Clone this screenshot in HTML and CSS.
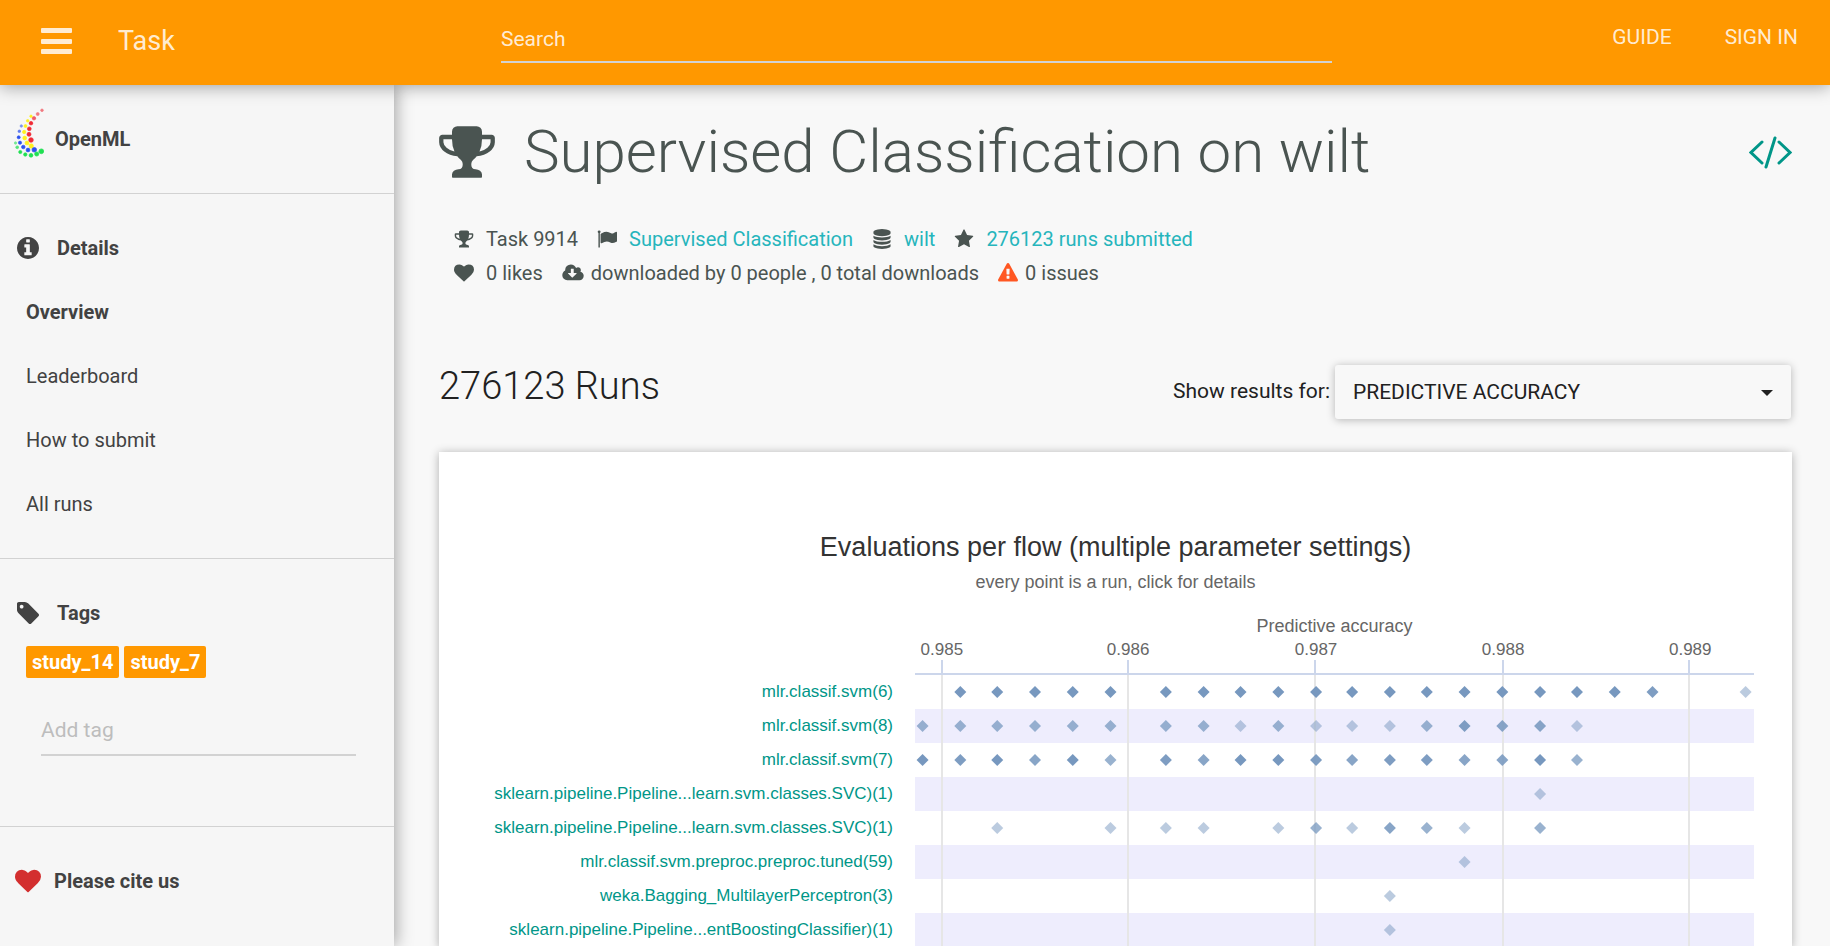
FILE: index.html
```html
<!DOCTYPE html>
<html lang="en">
<head>
<meta charset="utf-8">
<title>OpenML Task 9914</title>
<meta name="viewport" content="width=device-width, initial-scale=1">
<link rel="stylesheet" href="styles.css">
</head>
<body>
<svg class="sprite" aria-hidden="true">
  <symbol id="i-trophy" viewBox="0 0 1792 1792"><path d="M522 883q-74-162-74-371h-256v96q0 78 94.5 162t235.5 113zm1078-275v-96h-256q0 209-74 371 141-29 235.5-113t94.5-162zm128-128v128q0 71-41.5 143t-112 130-173 97.5-215.5 44.5q-42 54-95 95-38 34-52.5 72.5t-14.5 89.5q0 54 30.5 91t97.5 37q75 0 133.5 45.5t58.5 114.5v64q0 14-9 23t-23 9h-832q-14 0-23-9t-9-23v-64q0-69 58.5-114.5t133.5-45.5q67 0 97.5-37t30.5-91q0-51-14.5-89.5t-52.5-72.5q-53-41-95-95-113-5-215.5-44.5t-173-97.5-112-130-41.5-143v-128q0-40 28-68t68-28h288v-96q0-66 47-113t113-47h576q66 0 113 47t47 113v96h288q40 0 68 28t28 68z"/></symbol>
  <symbol id="i-info" viewBox="128 128 1536 1536"><path d="M1152 1376v-160q0-14-9-23t-23-9h-96v-512q0-14-9-23t-23-9h-320q-14 0-23 9t-9 23v160q0 14 9 23t23 9h96v320h-96q-14 0-23 9t-9 23v160q0 14 9 23t23 9h448q14 0 23-9t9-23zm-128-896v-160q0-14-9-23t-23-9h-192q-14 0-23 9t-9 23v160q0 14 9 23t23 9h192q14 0 23-9t9-23zm640 416q0 209-103 385.5t-279.5 279.5-385.5 103-385.5-103-279.5-279.5-103-385.5 103-385.5 279.5-279.5 385.5-103 385.5 103 279.5 279.5 103 385.5z"/></symbol>
  <symbol id="i-tag" viewBox="128 128 1515 1515"><path d="M576 448q0-53-37.5-90.5t-90.5-37.5-90.5 37.5-37.5 90.5 37.5 90.5 90.5 37.5 90.5-37.5 37.5-90.5zm1067 576q0 53-37 90l-491 492q-39 37-91 37-53 0-90-37l-715-716q-38-37-64.5-101t-26.5-117v-416q0-52 38-90t90-38h416q53 0 117 26.5t102 64.5l715 714q37 39 37 91z"/></symbol>
  <symbol id="i-heart" viewBox="0 0 1792 1792"><path d="M896 1664q-26 0-44-18l-624-602q-10-8-27.5-26t-55.5-65.5-68-97.5-53.5-121-23.5-138q0-220 127-344t351-124q62 0 126.5 21.5t120 58 95.5 68.5 76 68q36-36 76-68t95.5-68.5 120-58 126.5-21.5q224 0 351 124t127 344q0 221-229 450l-623 600q-18 18-44 18z"/></symbol>
  <symbol id="i-flag" viewBox="0 0 1792 1792"><path d="M320 256q0 72-64 110v1266q0 13-9.5 22.5t-22.5 9.5h-64q-13 0-22.5-9.5t-9.5-22.5v-1266q-64-38-64-110 0-53 37.5-90.5t90.5-37.5 90.5 37.5 37.5 90.5zm1472 64v763q0 25-12.5 38.5t-39.5 27.5q-215 116-369 116-61 0-123.5-22t-108.5-48-115.5-48-142.5-22q-192 0-464 146-17 9-33 9-26 0-45-19t-19-45v-742q0-32 31-55 21-14 79-43 236-120 421-120 107 0 200 29t219 88q38 19 88 19 54 0 117.5-21t110-47 88-47 54.5-21q26 0 45 19t19 45z"/></symbol>
  <symbol id="i-database" viewBox="0 0 1792 1792"><path d="M896 768q237 0 443-43t325-127v170q0 69-103 128t-280 93.5-385 34.5-385-34.5-280-93.5-103-128v-170q119 84 325 127t443 43zm0 768q237 0 443-43t325-127v170q0 69-103 128t-280 93.5-385 34.5-385-34.5-280-93.5-103-128v-170q119 84 325 127t443 43zm0-384q237 0 443-43t325-127v170q0 69-103 128t-280 93.5-385 34.5-385-34.5-280-93.5-103-128v-170q119 84 325 127t443 43zm0-1152q208 0 385 34.5t280 93.5 103 128v128q0 69-103 128t-280 93.5-385 34.5-385-34.5-280-93.5-103-128v-128q0-69 103-128t280-93.5 385-34.5z"/></symbol>
  <symbol id="i-star" viewBox="0 0 1792 1792"><path d="M1728 647q0 22-26 48l-363 354 86 500q1 7 1 20 0 21-10.5 35.5t-30.5 14.5q-19 0-40-12l-449-236-449 236q-22 12-40 12-21 0-31.5-14.5t-10.5-35.5q0-6 2-20l86-500-364-354q-25-27-25-48 0-37 56-46l502-73 225-455q19-41 49-41t49 41l225 455 502 73q56 9 56 46z"/></symbol>
  <symbol id="i-cloud" viewBox="-64 0 1920 1792"><path d="M1216 928q0-14-9-23t-23-9h-224v-352q0-13-9.5-22.5t-22.5-9.5h-192q-13 0-22.5 9.5t-9.5 22.5v352h-224q-13 0-22.5 9.5t-9.5 22.5q0 14 9 23l352 352q9 9 23 9t23-9l351-351q10-12 10-24zm640 224q0 159-112.5 271.5t-271.5 112.5h-1088q-185 0-316.5-131.5t-131.5-316.5q0-130 70-240t188-165q-2-30-2-43 0-212 150-362t362-150q156 0 285.5 87t188.5 231q71-62 166-62 106 0 181 75t75 181q0 76-41 138 130 31 213.5 135.5t83.5 238.5z"/></symbol>
  <symbol id="i-warning" viewBox="0 0 1792 1792"><path d="M1024 1375v-190q0-14-9.5-23.5t-22.5-9.5h-192q-13 0-22.5 9.5t-9.5 23.5v190q0 14 9.5 23.5t22.5 9.5h192q13 0 22.5-9.5t9.5-23.5zm-2-374l18-459q0-12-10-19-13-11-24-11h-220q-11 0-24 11-10 7-10 21l17 457q0 10 10 16.5t24 6.5h185q14 0 23.5-6.5t10.5-16.5zm-14-934l768 1408q35 63-2 126-17 29-46.5 46t-63.5 17h-1536q-34 0-63.5-17t-46.5-46q-37-63-2-126l768-1408q17-31 47-49t65-18 65 18 47 49z"/></symbol>
  <defs><path id="pt" d="M0-6L6 0L0 6L-6 0Z"/></defs>
</svg>

<header class="topbar">
  <div class="topbar-brand">
    <button class="menu-button" type="button" aria-label="Menu">
      <svg width="31" height="26" viewBox="0 0 31 26"><rect width="31" height="5" rx="1"/><rect y="11" width="31" height="5" rx="1"/><rect y="21" width="31" height="5" rx="1"/></svg>
    </button>
    <span class="topbar-title">Task</span>
  </div>
  <div class="topbar-main">
    <input class="search" type="text" placeholder="Search" aria-label="Search">
    <nav class="topbar-nav"><a href="#guide">GUIDE</a><a href="#signin">SIGN IN</a></nav>
  </div>
</header>

<div class="layout">
  <aside class="sidebar">
    <section class="side-section">
      <a class="side-item side-brand" href="#home">
        <svg width="30" height="50" viewBox="14 108 30 50" stroke-width="0.7" aria-hidden="true">
          <g fill="#f02a35" stroke="#f02a35"><circle cx="42" cy="110.3" r="1.3" opacity=".6"/><circle cx="37.7" cy="114" r="1.5" opacity=".6"/><circle cx="34" cy="118.3" r="1.7" opacity=".75"/><circle cx="31" cy="123.2" r="1.8"/><circle cx="29.3" cy="128.8" r="1.9"/><circle cx="29" cy="134.3" r="2"/><circle cx="31" cy="140" r="2.3"/></g>
          <g fill="#fff01e" stroke="#fff01e"><circle cx="31" cy="116.2" r="1.2"/><circle cx="27.7" cy="120.8" r="1.3"/><circle cx="25.5" cy="126" r="1.5"/><circle cx="24.2" cy="132" r="1.7"/><circle cx="24.7" cy="138" r="1.9"/><circle cx="27" cy="143" r="2"/><circle cx="31.2" cy="146" r="2.2"/></g>
          <g fill="#2b50ee" stroke="#2b50ee"><circle cx="21.3" cy="126" r="1.2" opacity=".6"/><circle cx="19.3" cy="131.3" r="1.3" opacity=".75"/><circle cx="18.7" cy="137.3" r="1.5"/><circle cx="20" cy="142.7" r="1.6"/><circle cx="23.3" cy="147" r="1.8"/><circle cx="28" cy="150" r="1.9"/><circle cx="34.3" cy="149.8" r="2.3"/></g>
          <g fill="#1fe052" stroke="#1fe052"><circle cx="15.5" cy="143" r="1.2" opacity=".6"/><circle cx="17.2" cy="147.3" r="1.4" opacity=".75"/><circle cx="20.3" cy="152" r="1.6"/><circle cx="25.3" cy="154.5" r="1.7"/><circle cx="31" cy="155.3" r="1.9"/><circle cx="36.7" cy="154" r="2.1"/><circle cx="41.3" cy="151.3" r="2.4"/></g>
        </svg>
        OpenML</a>
    </section>
    <section class="side-section">
      <h2 class="side-item side-heading"><svg class="icon-side"><use href="#i-info"/></svg>Details</h2>
      <nav>
        <a class="side-item side-link active" href="#overview">Overview</a>
        <a class="side-item side-link" href="#leaderboard">Leaderboard</a>
        <a class="side-item side-link" href="#submit">How to submit</a>
        <a class="side-item side-link" href="#runs">All runs</a>
      </nav>
    </section>
    <section class="side-section">
      <h2 class="side-item side-heading"><svg class="icon-side"><use href="#i-tag"/></svg>Tags</h2>
      <div class="tags"><a class="tag" href="#study_14">study_14</a><a class="tag" href="#study_7">study_7</a></div>
      <input class="add-tag" type="text" placeholder="Add tag" aria-label="Add tag">
    </section>
    <section class="side-section">
      <a class="side-item side-cite" href="#cite"><svg class="icon-heart"><use href="#i-heart"/></svg>Please cite us</a>
    </section>
  </aside>

  <main class="content">
    <div class="title-row">
      <svg class="icon-title"><use href="#i-trophy"/></svg>
      <h1>Supervised Classification on wilt</h1>
      <a class="code-link" href="#api" aria-label="API">
        <svg width="43" height="33" viewBox="0 0 43 33" fill="none" stroke="currentColor" stroke-width="3" stroke-linecap="round"><path d="M13 6L2 16.500L13 27M30 6L41 16.500L30 27M26 2L17 31"/></svg>
      </a>
    </div>
    <div class="meta">
      <div class="meta-row">
        <span class="meta-item"><svg class="icon"><use href="#i-trophy"/></svg>Task 9914</span>
        <span class="meta-item"><svg class="icon"><use href="#i-flag"/></svg><a href="#type">Supervised Classification</a></span>
        <span class="meta-item"><svg class="icon"><use href="#i-database"/></svg><a href="#wilt">wilt</a></span>
        <span class="meta-item"><svg class="icon"><use href="#i-star"/></svg><a href="#runs">276123 runs submitted</a></span>
      </div>
      <div class="meta-row">
        <span class="meta-item"><svg class="icon"><use href="#i-heart"/></svg>0 likes</span>
        <span class="meta-item tight"><svg class="icon wide"><use href="#i-cloud"/></svg>downloaded by 0 people , 0 total downloads</span>
        <span class="meta-item tight"><svg class="icon warning"><use href="#i-warning"/></svg>0 issues</span>
      </div>
    </div>

    <div class="runs-row">
      <h2>276123 Runs</h2>
      <label for="measure">Show results for:</label>
      <div class="select-wrap">
        <select id="measure"><option>PREDICTIVE ACCURACY</option></select>
      </div>
    </div>

    <section class="card">
      <h3 class="chart-title">Evaluations per flow (multiple parameter settings)</h3>
      <p class="chart-subtitle">every point is a run, click for details</p>
      <div class="chart">
        <div class="flows">
          <a href="#f1">mlr.classif.svm(6)</a>
          <a href="#f2">mlr.classif.svm(8)</a>
          <a href="#f3">mlr.classif.svm(7)</a>
          <a href="#f4">sklearn.pipeline.Pipeline...learn.svm.classes.SVC)(1)</a>
          <a href="#f5">sklearn.pipeline.Pipeline...learn.svm.classes.SVC)(1)</a>
          <a href="#f6">mlr.classif.svm.preproc.preproc.tuned(59)</a>
          <a href="#f7">weka.Bagging_MultilayerPerceptron(3)</a>
          <a href="#f8">sklearn.pipeline.Pipeline...entBoostingClassifier)(1)</a>
        </div>
        <div class="plot">
          <p class="axis-title">Predictive accuracy</p>
          <svg class="plot-area" width="100%" height="309">
            <g class="axis-label">
              <text x="3.2%" y="17">0.985</text><text x="25.4%" y="17">0.986</text><text x="47.8%" y="17">0.987</text><text x="70.1%" y="17">0.988</text><text x="92.4%" y="17">0.989</text>
            </g>
            <g class="band">
              <rect y="71" width="100%" height="34"/><rect y="139" width="100%" height="34"/><rect y="207" width="100%" height="34"/><rect y="275" width="100%" height="34"/>
            </g>
            <g class="grid">
              <line x1="3.2%" x2="3.2%" y1="37" y2="309"/><line x1="25.4%" x2="25.4%" y1="37" y2="309"/><line x1="47.7%" x2="47.7%" y1="37" y2="309"/><line x1="70.1%" x2="70.1%" y1="37" y2="309"/><line x1="92.3%" x2="92.3%" y1="37" y2="309"/>
            </g>
            <g class="axis">
              <line x1="0" x2="100%" y1="36" y2="36"/>
              <line x1="3.2%" x2="3.2%" y1="22" y2="36"/><line x1="25.4%" x2="25.4%" y1="22" y2="36"/><line x1="47.7%" x2="47.7%" y1="22" y2="36"/><line x1="70.1%" x2="70.1%" y1="22" y2="36"/><line x1="92.3%" x2="92.3%" y1="22" y2="36"/>
            </g>
            <svg class="points" y="54" overflow="visible">
              <use class="n5" href="#pt" x="5.4%"/><use class="n5" href="#pt" x="9.8%"/><use class="n5" href="#pt" x="14.3%"/><use class="n5" href="#pt" x="18.8%"/><use class="n5" href="#pt" x="23.3%"/><use class="n5" href="#pt" x="29.9%"/><use class="n5" href="#pt" x="34.4%"/><use class="n5" href="#pt" x="38.8%"/><use class="n5" href="#pt" x="43.3%"/><use class="n5" href="#pt" x="47.8%"/><use class="n5" href="#pt" x="52.1%"/><use class="n5" href="#pt" x="56.6%"/><use class="n5" href="#pt" x="61%"/><use class="n5" href="#pt" x="65.5%"/><use class="n5" href="#pt" x="70%"/><use class="n5" href="#pt" x="74.5%"/><use class="n5" href="#pt" x="78.9%"/><use class="n5" href="#pt" x="83.4%"/><use class="n4" href="#pt" x="87.9%"/><use class="n1" href="#pt" x="99%"/>
            </svg>
            <svg class="points" y="88" overflow="visible">
              <use class="n2" href="#pt" x="0.9%"/><use class="n2" href="#pt" x="5.4%"/><use class="n2" href="#pt" x="9.8%"/><use class="n2" href="#pt" x="14.3%"/><use class="n2" href="#pt" x="18.8%"/><use class="n2" href="#pt" x="23.3%"/><use class="n2" href="#pt" x="29.9%"/><use class="n2" href="#pt" x="34.4%"/><use class="n1" href="#pt" x="38.8%"/><use class="n2" href="#pt" x="43.3%"/><use class="n1" href="#pt" x="47.8%"/><use class="n1" href="#pt" x="52.1%"/><use class="n1" href="#pt" x="56.6%"/><use class="n2" href="#pt" x="61%"/><use class="n4" href="#pt" x="65.5%"/><use class="n3" href="#pt" x="70%"/><use class="n3" href="#pt" x="74.5%"/><use class="n1" href="#pt" x="78.9%"/>
            </svg>
            <svg class="points" y="122" overflow="visible">
              <use class="n5" href="#pt" x="0.9%"/><use class="n4" href="#pt" x="5.4%"/><use class="n5" href="#pt" x="9.8%"/><use class="n3" href="#pt" x="14.3%"/><use class="n5" href="#pt" x="18.8%"/><use class="n2" href="#pt" x="23.3%"/><use class="n4" href="#pt" x="29.9%"/><use class="n3" href="#pt" x="34.4%"/><use class="n5" href="#pt" x="38.8%"/><use class="n5" href="#pt" x="43.3%"/><use class="n4" href="#pt" x="47.8%"/><use class="n3" href="#pt" x="52.1%"/><use class="n4" href="#pt" x="56.6%"/><use class="n4" href="#pt" x="61%"/><use class="n3" href="#pt" x="65.5%"/><use class="n3" href="#pt" x="70%"/><use class="n5" href="#pt" x="74.5%"/><use class="n2" href="#pt" x="78.9%"/>
            </svg>
            <svg class="points" y="156" overflow="visible">
              <use class="n1" href="#pt" x="74.5%"/>
            </svg>
            <svg class="points" y="190" overflow="visible">
              <use class="n1" href="#pt" x="9.8%"/><use class="n1" href="#pt" x="23.3%"/><use class="n1" href="#pt" x="29.9%"/><use class="n1" href="#pt" x="34.4%"/><use class="n1" href="#pt" x="43.3%"/><use class="n2" href="#pt" x="47.8%"/><use class="n1" href="#pt" x="52.1%"/><use class="n3" href="#pt" x="56.6%"/><use class="n2" href="#pt" x="61%"/><use class="n1" href="#pt" x="65.5%"/><use class="n2" href="#pt" x="74.5%"/>
            </svg>
            <svg class="points" y="224" overflow="visible">
              <use class="n1" href="#pt" x="65.5%"/>
            </svg>
            <svg class="points" y="258" overflow="visible">
              <use class="n1" href="#pt" x="56.6%"/>
            </svg>
            <svg class="points" y="292" overflow="visible">
              <use class="n1" href="#pt" x="56.6%"/>
            </svg>
          </svg>
        </div>
      </div>
    </section>
  </main>
</div>
</body>
</html>
```
FILE: styles.css
```css
* { box-sizing: border-box; }

html, body { height: 100%; }

body {
  margin: 0;
  display: flex;
  flex-direction: column;
  overflow: hidden;
  background: #f8f8f8;
  color: #212121;
  font-family: Roboto, "Liberation Sans", sans-serif;
  font-size: 20px;
}

a { color: inherit; text-decoration: none; }
h1, h2, h3, p { margin: 0; }
input, button, select { font: inherit; }
.sprite { display: none; }

/* Top bar */
.topbar {
  position: relative;
  z-index: 2;
  flex: none;
  display: flex;
  height: 85px;
  background: #ff9800;
  color: rgba(255, 255, 255, .84);
  box-shadow: 0 2px 16px rgba(0, 0, 0, .35);
}
.topbar-brand {
  flex: none;
  width: 394px;
  padding: 0 0 4px 41px;
  display: flex;
  align-items: center;
  gap: 46px;
}
.menu-button {
  padding: 0;
  border: 0;
  background: none;
  line-height: 0;
  fill: #ffecd3;
}
.topbar-title { font-size: 27px; line-height: 36px; }
.topbar-main {
  flex: 1;
  display: flex;
  gap: 280px;
  padding: 15px 32px 22px 107px;
  font-size: 21px;
}
.search {
  flex: 1;
  min-width: 0;
  padding: 2px 0 0;
  border: 0;
  border-bottom: 2px solid #d2d2d2;
  border-radius: 0;
  background: none;
  color: inherit;
  outline: 0;
}
.search::placeholder { color: rgba(255, 255, 255, .84); opacity: 1; }
.topbar-nav { display: flex; gap: 53px; line-height: 44px; }

/* Sidebar */
.layout { flex: 1; min-height: 0; display: flex; }
.sidebar {
  position: relative;
  z-index: 1;
  flex: none;
  width: 394px;
  background: #f6f6f6;
  color: #424242;
  box-shadow: 2px 0 16px rgba(0, 0, 0, .35);
}
.side-section { padding: 22px 0; border-bottom: 1px solid #d2d2d2; }
.side-section:last-child { border-bottom: 0; }
.side-item {
  display: flex;
  align-items: center;
  height: 64px;
  font-size: 20px;
  font-weight: 400;
}
.side-brand { padding-left: 14px; gap: 11px; font-weight: 700; }
.side-brand svg { margin-bottom: 12px; }
.side-heading { padding-left: 17px; gap: 18px; font-weight: 700; }
.side-link { padding-left: 26px; }
.side-link.active { font-weight: 700; }
.side-cite { padding-left: 15px; gap: 13px; font-weight: 700; }
.icon-side { width: 22px; height: 22px; fill: currentColor; }
.icon-heart { width: 26px; height: 26px; fill: #d32f2f; }
.tags { display: flex; gap: 5px; margin-top: 1px; padding-left: 26px; }
.tag {
  padding: 0 6px;
  border-radius: 2px;
  background: #ff9800;
  color: #fff;
  font-weight: 700;
  line-height: 32px;
}
.add-tag {
  display: block;
  width: 315px;
  height: 56px;
  margin: 22px 0 48px 41px;
  padding: 6px 0 0;
  border: 0;
  border-bottom: 2px solid #d2d2d2;
  background: none;
  font-size: 21px;
  outline: 0;
}
.add-tag::placeholder { color: #bdbdbd; opacity: 1; }

/* Main column */
.content { flex: 1; min-width: 0; padding: 34px 38px 0 45px; }
.title-row { display: flex; align-items: center; height: 66px; color: #4a5451; }
.title-row h1 { flex: 1; padding-left: 27px; font-size: 60px; font-weight: 300; line-height: 66px; }
.icon-title { flex: none; width: 60px; height: 60px; margin-left: -2px; fill: currentColor; }
.code-link { color: #009688; line-height: 0; }

.meta { padding: 37px 0 0 15px; color: #4a5451; }
.meta-row { display: flex; align-items: center; gap: 19px; height: 34px; }
.meta-item { display: flex; align-items: center; gap: 12px; white-space: nowrap; }
.meta-item.tight { gap: 7px; }
.meta a { color: #26b5bc; }
.icon { width: 20px; height: 20px; fill: currentColor; }
.icon.wide { width: 22px; }
.icon.warning { fill: #ff5722; }

.runs-row { display: flex; align-items: center; height: 54px; margin-top: 75px; padding-right: 1px; font-size: 21px; }
.runs-row h2 { flex: 1; padding-bottom: 12px; font-size: 38px; font-weight: 300; line-height: 40px; }
.runs-row label { padding: 0 5px 3px 0; }
.select-wrap { position: relative; flex: none; width: 456px; }
.select-wrap::after {
  content: "";
  position: absolute;
  right: 18px;
  top: 25px;
  border: 6px solid transparent;
  border-top-color: #212121;
  border-bottom: 0;
  pointer-events: none;
}
.select-wrap select {
  display: block;
  width: 100%;
  height: 54px;
  padding: 0 18px;
  border: 0;
  border-radius: 3px;
  appearance: none;
  background: #f8f8f8;
  color: #212121;
  box-shadow: 0 1px 9px rgba(0, 0, 0, .27);
}

/* Chart card */
.card {
  margin-top: 33px;
  padding: 79px 38px 0 24px;
  background: #fff;
  box-shadow: 0 1px 9px rgba(0, 0, 0, .3);
  font-family: "Liberation Sans", Arial, sans-serif;
}
.chart-title { margin-right: -14px; color: #333; font-size: 27px; font-weight: 400; line-height: 32px; text-align: center; }
.chart-subtitle { margin: 9px -14px 0 0; color: #666; font-size: 18px; line-height: 20px; text-align: center; }
.chart { display: grid; grid-template-columns: 430px 1fr; column-gap: 22px; margin-top: 24px; }
.flows { padding-top: 59px; color: #009688; font-size: 17px; text-align: right; }
.flows a { display: block; line-height: 34px; white-space: nowrap; }
.axis-title { color: #666; font-size: 18px; line-height: 20px; text-align: center; }
.plot-area { display: block; margin-top: 2px; }
.axis-label { fill: #666; font-size: 17px; text-anchor: middle; }
.band { fill: #eeedfd; }
.grid line { stroke: #e6e6e6; stroke-width: 2px; shape-rendering: crispEdges; }
.axis line { stroke: #ccd6eb; stroke-width: 2px; shape-rendering: crispEdges; }
.points { fill: #7798bf; }
.n1 { opacity: .5; }
.n2 { opacity: .75; }
.n3 { opacity: .88; }
.n4 { opacity: .95; }
```
